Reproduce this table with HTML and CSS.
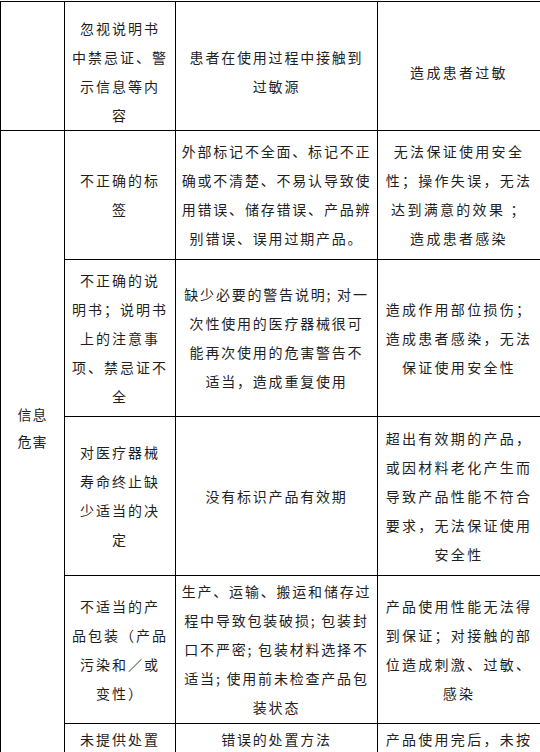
FILE: index.html
```html
<!DOCTYPE html>
<html lang="zh-CN">
<head>
<meta charset="utf-8">
<title>信息危害</title>
<link rel="stylesheet" href="styles.css">
</head>
<body>
<table class="hazard">
  <colgroup>
    <col class="c0"><col class="c1"><col class="c2"><col class="c3">
  </colgroup>
  <tr class="r0">
    <td class="cat"></td>
    <td class="first">忽视说明书<br>中禁忌证、警<br>示信息等内<br>容</td>
    <td class="first">患者在使用过程中接触到<br>过敏源</td>
    <td class="first">造成患者过敏</td>
  </tr>
  <tr class="r1">
    <td class="cat" rowspan="5">信息<br>危害</td>
    <td>不正确的标<br>签</td>
    <td>外部标记不全面、标记不正<br>确或不清楚、不易认导致使<br>用错误、储存错误、产品辨<br>别错误、误用过期产品。</td>
    <td>无法保证使用安全<br>性；操作失误，无法<br>达到满意的效果 ；<br>造成患者感染</td>
  </tr>
  <tr class="r2">
    <td>不正确的说<br>明书；说明书<br>上的注意事<br>项、禁忌证不<br>全</td>
    <td>缺少必要的警告说明; 对一<br>次性使用的医疗器械很可<br>能再次使用的危害警告不<br>适当，造成重复使用</td>
    <td>造成作用部位损伤；<br>造成患者感染，无法<br>保证使用安全性</td>
  </tr>
  <tr class="r3">
    <td>对医疗器械<br>寿命终止缺<br>少适当的决<br>定</td>
    <td>没有标识产品有效期</td>
    <td>超出有效期的产品，<br>或因材料老化产生而<br>导致产品性能不符合<br>要求，无法保证使用<br>安全性</td>
  </tr>
  <tr class="r4">
    <td>不适当的产<br>品包装（产品<br>污染和／或<br>变性）</td>
    <td>生产、运输、搬运和储存过<br>程中导致包装破损; 包装封<br>口不严密; 包装材料选择不<br>适当; 使用前未检查产品包<br>装状态</td>
    <td>产品使用性能无法得<br>到保证；对接触的部<br>位造成刺激、过敏、<br>感染</td>
  </tr>
  <tr class="r5">
    <td>未提供处置</td>
    <td>错误的处置方法</td>
    <td>产品使用完后，未按</td>
  </tr>
</table>
</body>
</html>
```
FILE: styles.css
```css
html, body {
  margin: 0;
  padding: 0;
  background: #ffffff;
}
body {
  padding-top: 1px;
  font-family: "Noto Sans CJK SC", "Noto Sans", sans-serif;
  color: #1f1f1f;
}
.hazard {
  border-collapse: collapse;
  table-layout: fixed;
  width: 540px;
  font-size: 14px;
  line-height: 29px;
  letter-spacing: 2px;
}
.c0 { width: 64px; }
.c1 { width: 111px; }
.c2 { width: 202px; }
.c3 { width: 163px; }
.hazard td {
  border: 1px solid #000;
  padding: 0;
  text-align: center;
  vertical-align: middle;
  white-space: nowrap;
  overflow: hidden;
}
.hazard td:nth-last-child(2) { letter-spacing: 1.8px; }
.hazard td:last-child { letter-spacing: 2.3px; }
.hazard .cat {
  line-height: 27px;
  letter-spacing: 1px;
  padding-bottom: 30px;
}
.hazard .first { padding-top: 12px; }
.r0 { height: 125px; }
.r1 { height: 129px; }
.r2 { height: 157px; }
.r3 { height: 159px; }
.r4 { height: 148px; }
.r5 { height: 31px; }
```
